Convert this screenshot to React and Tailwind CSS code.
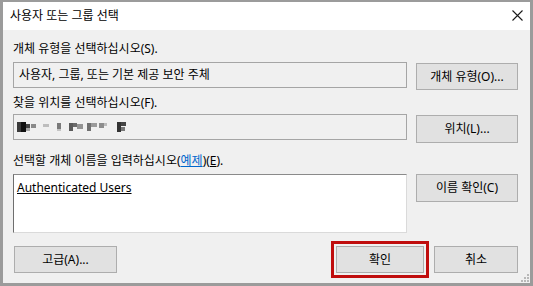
import React from "react";

const font = { fontFamily: '"Noto Sans", "Noto Sans CJK KR", sans-serif' };

function Btn({ children, className = "" }) {
  return (
    <button
      className={`h-[27px] bg-[#e1e1e1] border border-[#adadad] text-[12px] leading-4 text-black flex items-center justify-center ${className}`}
    >
      {children}
    </button>
  );
}

// pixelated (masked) location text
function Masked() {
  const cells = [
    [0, 1, 4, 10, "#3a3a3a"],
    [4, 1, 5, 10, "#111"],
    [9, 3, 4, 4, "#444"],
    [9, 7, 4, 3, "#a5a5a5"],
    [14, 3, 5, 4, "#8a8a8a"],
    [26, 3, 6, 3, "#bdbdbd"],
    [40, 2, 4, 6, "#7a7a7a"],
    [40, 8, 4, 2, "#c4c4c4"],
    [52, 2, 4, 8, "#5a5a5a"],
    [56, 2, 4, 4, "#6a6a6a"],
    [60, 3, 6, 5, "#939393"],
    [70, 2, 4, 8, "#707070"],
    [74, 2, 6, 4, "#9a9a9a"],
    [82, 2, 5, 5, "#8d8d8d"],
    [87, 2, 3, 3, "#bcbcbc"],
    [100, 1, 4, 10, "#333"],
    [104, 1, 5, 4, "#444"],
    [104, 6, 4, 4, "#777"],
  ];
  return (
    <svg width="112" height="12" viewBox="0 0 112 12">
      {cells.map(([x, y, w, h, c], i) => (
        <rect key={i} x={x} y={y} width={w} height={h} fill={c} />
      ))}
    </svg>
  );
}

export default function App() {
  return (
    <div
      style={font}
      className="w-[533px] h-[286px] bg-[#9b9b9b] pt-[2px] px-[3px] pb-[3px] text-black text-[12px] leading-4"
    >
      <div className="h-[28px] bg-white flex items-center justify-between pl-[7px] pr-[7px]">
        <span className="h-4">사용자 또는 그룹 선택</span>
        <svg width="11" height="11" viewBox="0 0 11 11" className="mb-[1px]">
          <path d="M0.5 0.5 L10.5 10.5 M10.5 0.5 L0.5 10.5" stroke="#1a1a1a" strokeWidth="1.1" />
        </svg>
      </div>

      <div className="relative h-[253px] bg-[#f0f0f0] pl-[10px] pr-[12px] flex flex-col">
        <div className="mt-[11px] h-4 shrink-0">개체 유형을 선택하십시오(S).</div>
        <div className="mt-[5px] flex items-start gap-[9px]">
          <div className="w-[394px] h-[26px] border border-[#a5a5a5] bg-[#f0f0f0] flex items-center pl-[5px] pb-[1px]">
            <span className="h-4">사용자, 그룹, 또는 기본 제공 보안 주체</span>
          </div>
          <Btn className="w-[102px] mt-[1px]">개체 유형(O)...</Btn>
        </div>

        <div className="mt-[5px] h-4 shrink-0">찾을 위치를 선택하십시오(F).</div>
        <div className="mt-[3px] flex items-start gap-[9px]">
          <div className="w-[394px] h-[26px] border border-[#a5a5a5] bg-[#f0f0f0] flex items-center pl-[3px]">
            <Masked />
          </div>
          <Btn className="w-[102px] mt-[1px] h-[28px]">위치(L)...</Btn>
        </div>

        <div className="mt-[10px] h-4 shrink-0">
          선택할 개체 이름을 입력하십시오(
          <span className="text-[#0066cc] underline">예제</span>)(<span className="underline">E</span>).
        </div>
        <div className="mt-[5px] flex items-start gap-[9px]">
          <div className="w-[394px] h-[59px] bg-white border border-l-[#6e6e6e] border-t-[#8a8a8a] border-r-[#dadada] border-b-[#dadada] pl-[3px] pt-[5px]">
            <div className="h-4 underline">Authenticated Users</div>
          </div>
          <Btn className="w-[102px] h-[28px]">이름 확인(C)</Btn>
        </div>

        <div className="mt-[13px] pl-[1px] flex items-center">
          <Btn className="w-[103px]">고급(A)...</Btn>
          <div className="flex-1" />
          <Btn className="w-[88px] outline-[3px] outline-solid outline-[#c00d0d] outline-offset-[2px]">
            확인
          </Btn>
          <Btn className="w-[84px] ml-[10px]">취소</Btn>
        </div>

        <svg width="9" height="9" viewBox="0 0 9 9" className="absolute right-[1px] bottom-[1px]">
          {[
            [7, 1],
            [4, 4],
            [7, 4],
            [1, 7],
            [4, 7],
            [7, 7],
          ].map(([x, y], i) => (
            <rect key={i} x={x} y={y} width="2" height="2" fill="#b8b8b8" />
          ))}
        </svg>
      </div>
    </div>
  );
}
